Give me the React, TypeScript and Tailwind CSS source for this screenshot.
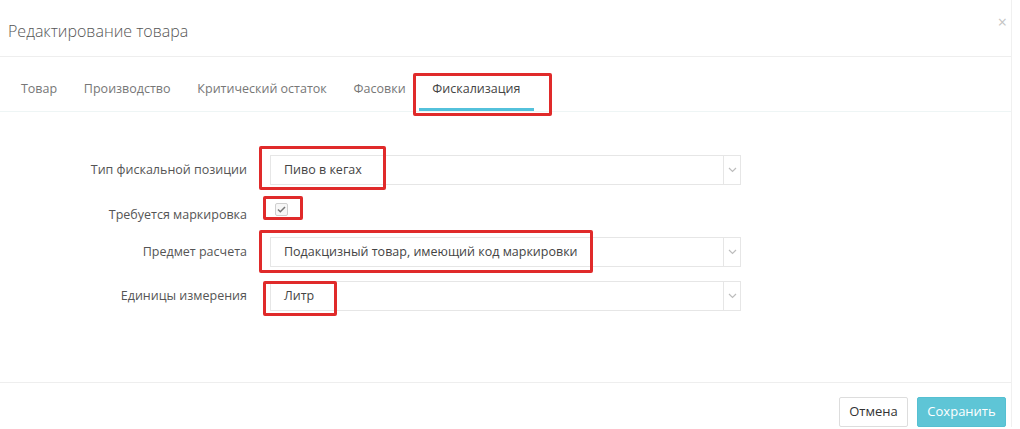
const tabs = ["Товар", "Производство", "Критический остаток", "Фасовки", "Фискализация"];

function Chevron() {
  return (
    <svg width="9" height="6" viewBox="0 0 9 6" fill="none">
      <path d="M1 1l3.5 3.5L8 1" stroke="#bdbdbd" strokeWidth="1.2" />
    </svg>
  );
}

function Select({ value }: { value: string }) {
  return (
    <div className="flex h-[30px] w-[471px] border border-[#e6e6e6] bg-white">
      <div className="flex flex-1 items-center pl-[13px] text-[12.5px] text-[#444]">{value}</div>
      <div className="flex w-[17px] items-center justify-center border-l border-[#e6e6e6]">
        <Chevron />
      </div>
    </div>
  );
}

function Label({ children, className }: { children: React.ReactNode; className?: string }) {
  return (
    <div className={"w-[247px] text-right text-[12.5px] leading-[18px] text-[#555] " + (className ?? "")}>
      {children}
    </div>
  );
}

export default function App() {
  return (
    <div
      className="relative h-[429px] w-[1020px] overflow-hidden bg-white"
      style={{ fontFamily: '"Open Sans", "Liberation Sans", sans-serif' }}
    >
      <div className="w-[1012px] border-r border-[#f0f0f0]">
        {/* header */}
        <div className="flex h-[57px] items-center justify-between border-b border-[#eeeeee] pl-[8px] pr-[4px]">
          <h4 className="pt-[6px] text-[16px] font-light text-[#555]">Редактирование товара</h4>
          <span className="-mt-[12px] text-[16px] leading-none text-[#c4c4c4]">×</span>
        </div>

        {/* tabs */}
        <div className="flex h-[55px] items-end border-b border-[#eef5f5] pl-[7.5px] pr-[4px]">
          {tabs.map((t, i) => (
            <div
              key={t}
              className={
                "px-[13.4px] pb-[9px] text-[12.5px] " +
                (i === tabs.length - 1
                  ? "border-b-[3px] border-[#53c1db] text-[#444]"
                  : "border-b-[3px] border-transparent text-[#777]")
              }
            >
              {t}
            </div>
          ))}
        </div>

        {/* form */}
        <div className="h-[270px] pt-[43px]">
          <div className="flex items-center">
            <Label>Тип фискальной позиции</Label>
            <div className="ml-[23px]">
              <Select value="Пиво в кегах" />
            </div>
          </div>
          <div className="flex h-[52px] items-start">
            <Label className="pt-[21px]">Требуется маркировка</Label>
            <div className="ml-[28px] mt-[18px] flex h-[13px] w-[13px] items-center justify-center rounded-[2px] border border-[#cfcfcf] bg-[#f7f7f7]">
              <svg width="9" height="7" viewBox="0 0 9 7" fill="none">
                <path d="M1 3.5l2.3 2.2L8 1" stroke="#777" strokeWidth="1.5" />
              </svg>
            </div>
          </div>
          <div className="flex items-center">
            <Label>Предмет расчета</Label>
            <div className="ml-[23px]">
              <Select value="Подакцизный товар, имеющий код маркировки" />
            </div>
          </div>
          <div className="mt-[14px] flex items-center">
            <Label>Единицы измерения</Label>
            <div className="ml-[23px]">
              <Select value="Литр" />
            </div>
          </div>
        </div>

        {/* footer */}
        <div className="flex justify-end gap-[9px] border-t border-[#eeeeee] pr-[5px] pt-[14px]">
          <button className="h-[30px] w-[69px] rounded-[2px] border border-[#dddddd] bg-white text-[13px] text-[#333]">
            Отмена
          </button>
          <button className="h-[30px] w-[89px] rounded-[2px] border border-[#55c0d2] bg-[#5ec5d6] text-[13px] text-white">
            Сохранить
          </button>
        </div>
      </div>

      {/* annotation boxes */}
      <div className="absolute left-[413px] top-[73px] h-[43px] w-[139px] rounded-[2px] border-[3px] border-[#e02a2a]" />
      <div className="absolute left-[259px] top-[146px] h-[44px] w-[127px] rounded-[2px] border-[3px] border-[#e02a2a]" />
      <div className="absolute left-[263px] top-[196px] h-[24px] w-[40px] rounded-[2px] border-[3px] border-[#e02a2a]" />
      <div className="absolute left-[259px] top-[230px] h-[43px] w-[334px] rounded-[2px] border-[3px] border-[#e02a2a]" />
      <div className="absolute left-[263px] top-[281px] h-[35px] w-[74px] rounded-[2px] border-[3px] border-[#e02a2a]" />
    </div>
  );
}
